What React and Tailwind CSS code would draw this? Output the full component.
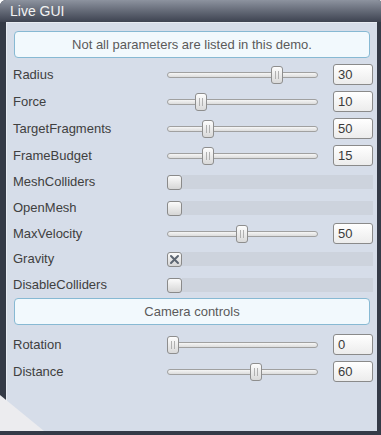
import React from "react";

const font = { fontFamily: '"Liberation Sans", Arial, sans-serif' };

const Slider = ({ pos }) => (
  <div className="relative w-[151px] h-[18px] flex items-center">
    <div className="w-full h-[6px] rounded-[3px] border border-[#a0a0a0] bg-gradient-to-b from-[#f6f6f6] to-[#dcdcdc]" />
    <div
      className="absolute top-0 w-[12px] h-[18px] rounded-[3px] border border-[#8e8e8e] bg-gradient-to-b from-[#fdfdfd] to-[#d9d9d9] flex items-center justify-center gap-[2px]"
      style={{ left: pos - 6 }}
    >
      <div className="w-[1px] h-[8px] bg-[#b0b0b0]" />
      <div className="w-[1px] h-[8px] bg-[#b0b0b0]" />
    </div>
  </div>
);

const NumberBox = ({ value }) => (
  <div className="w-[40px] h-[21px] rounded-[3px] border border-[#8a8a8a] bg-gradient-to-b from-[#ffffff] to-[#ececec] pl-[4px] flex items-center text-[13px] text-[#3a3a3a]">
    {value}
  </div>
);

const SliderRow = ({ label, pos, value, h }) => (
  <div className={`flex items-center ${h}`}>
    <div className="w-[154px] text-[13px] text-[#404040]">{label}</div>
    <Slider pos={pos} />
    <div className="w-[15px]" />
    <NumberBox value={value} />
  </div>
);

const ToggleRow = ({ label, checked, h }) => (
  <div className={`flex items-center ${h}`}>
    <div className="w-[154px] text-[13px] text-[#404040]">{label}</div>
    <div className="flex items-center w-[206px]">
      <div className="w-[15px] h-[15px] rounded-[3px] border border-[#8a8a8a] bg-gradient-to-b from-[#fbfbfb] to-[#d6d6d6] flex items-center justify-center shrink-0">
        {checked && (
          <svg width="11" height="11" viewBox="0 0 11 11">
            <path d="M2 2 L9 9 M9 2 L2 9" stroke="#5d6672" strokeWidth="2" strokeLinecap="round" />
          </svg>
        )}
      </div>
      <div className="flex-1 h-[14px] bg-[#cdd3dd]" />
    </div>
  </div>
);

const InfoBox = ({ children }) => (
  <div className="mx-[7px] h-[27px] rounded-[4px] border border-[#87b9d3] bg-[#f2f9fd] flex items-center justify-center text-[13px] text-[#5a5a5a]">
    {children}
  </div>
);

export default function App() {
  return (
    <div style={font} className="relative w-[381px] h-[435px] bg-[#343a47] rounded-tl-[6px] rounded-tr-[3px] overflow-hidden">
      {/* Title bar */}
      <div className="h-[22px] bg-gradient-to-b from-[#8d939f] to-[#3e4351] flex items-center pl-[10px] text-[14px] text-[#f2f2f2]">
        Live GUI
      </div>
      {/* Panel */}
      <div className="ml-[6px] mr-[4px] h-[409px] bg-[#d6dde9] border-l border-t border-[#e8ecf3] pt-[8px]">
        <InfoBox>Not all parameters are listed in this demo.</InfoBox>
        <div className="pl-[6px] pt-[3px]">
          <SliderRow label="Radius" pos={110} value="30" h="h-[27px]" />
          <SliderRow label="Force" pos={34} value="10" h="h-[27px]" />
          <SliderRow label="TargetFragments" pos={41} value="50" h="h-[27px]" />
          <SliderRow label="FrameBudget" pos={41} value="15" h="h-[27px]" />
          <ToggleRow label="MeshColliders" h="h-[26px]" />
          <ToggleRow label="OpenMesh" h="h-[26px]" />
          <SliderRow label="MaxVelocity" pos={75} value="50" h="h-[25px]" />
          <ToggleRow label="Gravity" checked h="h-[26px]" />
          <ToggleRow label="DisableColliders" h="h-[26px]" />
        </div>
        <InfoBox>Camera controls</InfoBox>
        <div className="pl-[6px] pt-[6px]">
          <SliderRow label="Rotation" pos={6} value="0" h="h-[27px]" />
          <SliderRow label="Distance" pos={89} value="60" h="h-[27px]" />
        </div>
      </div>
      {/* Resize corner */}
      <svg className="absolute left-0 bottom-0" width="50" height="42" viewBox="0 0 50 42">
        <polygon points="0,2 44,38 0,38" fill="#ececef" />
      </svg>
    </div>
  );
}
